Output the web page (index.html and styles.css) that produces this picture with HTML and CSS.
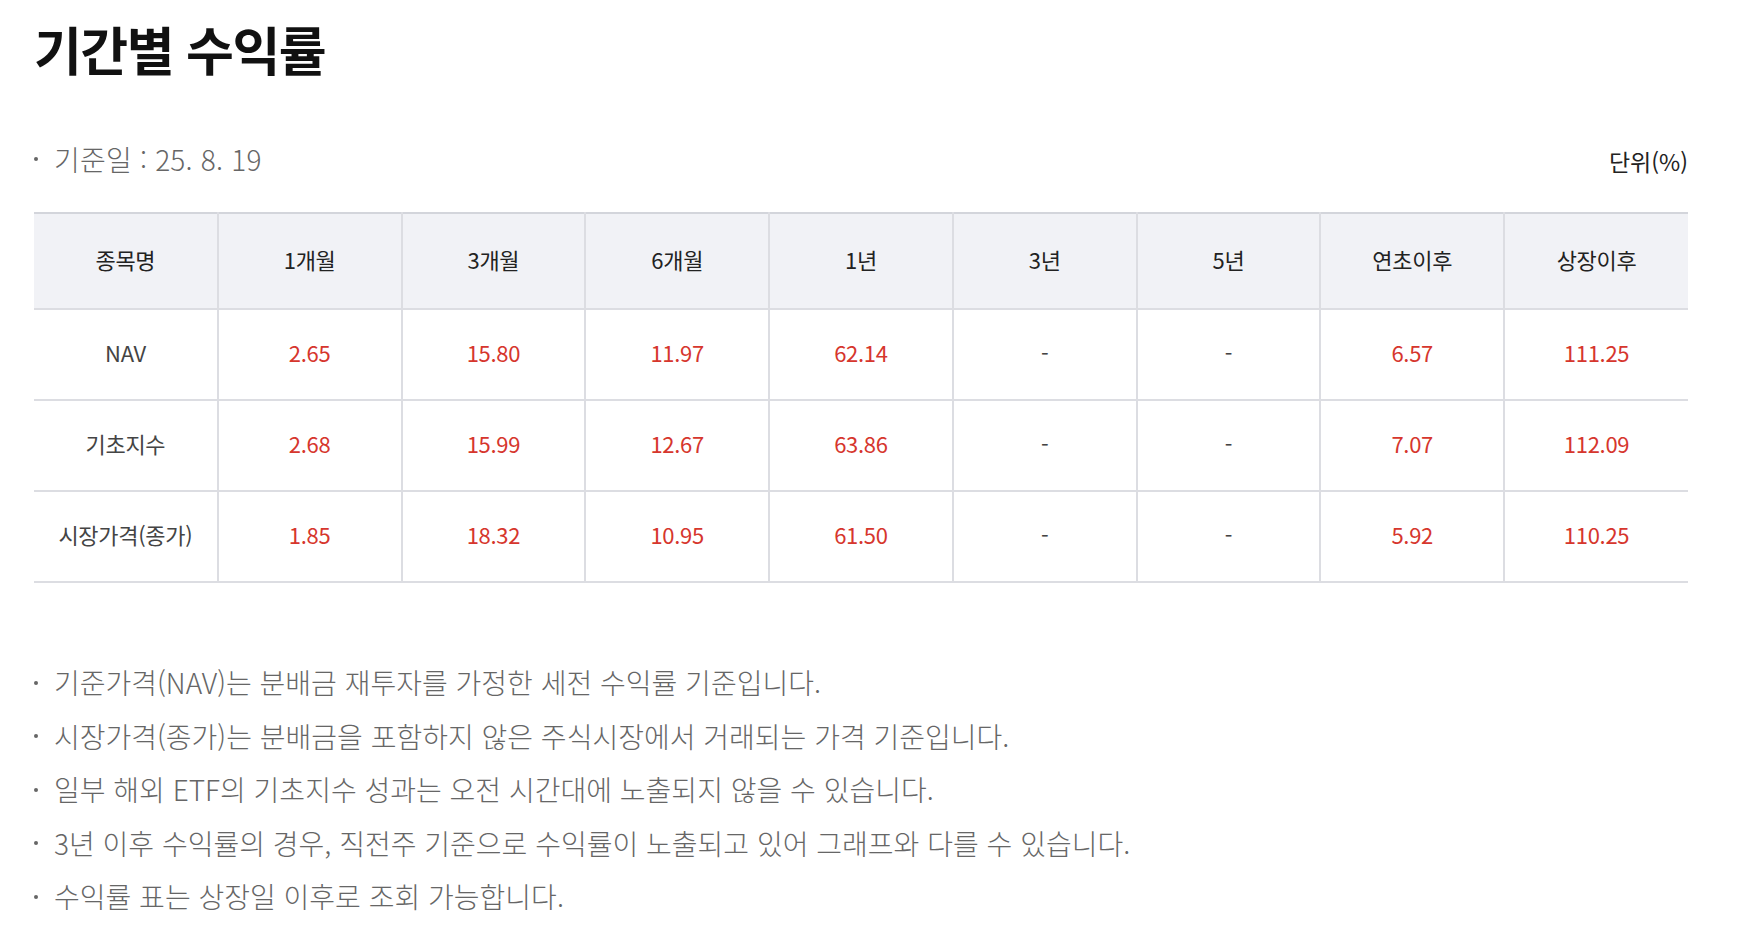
FILE: index.html
```html
<!DOCTYPE html>
<html lang="ko">
<head>
<meta charset="utf-8">
<title>기간별 수익률</title>
<link rel="stylesheet" href="styles.css">
</head>
<body>
<section class="returns">
  <h2 class="returns-title">기간별 수익률</h2>
  <div class="returns-info">
    <p class="bullet base-date">기준일 : 25. 8. 19</p>
    <p class="unit">단위(%)</p>
  </div>
  <table class="returns-table">
    <thead>
      <tr>
        <th>종목명</th><th>1개월</th><th>3개월</th><th>6개월</th><th>1년</th><th>3년</th><th>5년</th><th>연초이후</th><th>상장이후</th>
      </tr>
    </thead>
    <tbody>
      <tr>
        <td class="name">NAV</td><td class="up">2.65</td><td class="up">15.80</td><td class="up">11.97</td><td class="up">62.14</td><td class="none">-</td><td class="none">-</td><td class="up">6.57</td><td class="up">111.25</td>
      </tr>
      <tr>
        <td class="name">기초지수</td><td class="up">2.68</td><td class="up">15.99</td><td class="up">12.67</td><td class="up">63.86</td><td class="none">-</td><td class="none">-</td><td class="up">7.07</td><td class="up">112.09</td>
      </tr>
      <tr>
        <td class="name">시장가격(종가)</td><td class="up">1.85</td><td class="up">18.32</td><td class="up">10.95</td><td class="up">61.50</td><td class="none">-</td><td class="none">-</td><td class="up">5.92</td><td class="up">110.25</td>
      </tr>
    </tbody>
  </table>
  <ul class="notes">
    <li class="bullet">기준가격(NAV)는 분배금 재투자를 가정한 세전 수익률 기준입니다.</li>
    <li class="bullet">시장가격(종가)는 분배금을 포함하지 않은 주식시장에서 거래되는 가격 기준입니다.</li>
    <li class="bullet">일부 해외 ETF의 기초지수 성과는 오전 시간대에 노출되지 않을 수 있습니다.</li>
    <li class="bullet">3년 이후 수익률의 경우, 직전주 기준으로 수익률이 노출되고 있어 그래프와 다를 수 있습니다.</li>
    <li class="bullet">수익률 표는 상장일 이후로 조회 가능합니다.</li>
  </ul>
</section>
</body>
</html>
```

FILE: styles.css
```css
* { box-sizing: border-box; }
html, body { margin: 0; padding: 0; background: #fff; }
body {
  font-family: "Noto Sans CJK KR", "Noto Sans", sans-serif;
  color: #222;
}
.returns {
  width: 1654px;
  margin-left: 34px;
  padding-top: 14px;
}
.returns-title {
  margin: 0;
  font-size: 52px;
  line-height: 70px;
  font-weight: 700;
  letter-spacing: -1.5px;
  color: #111;
}
.returns-info {
  display: flex;
  justify-content: space-between;
  align-items: baseline;
  margin-top: 55px;
}
.returns-info p { margin: 0; }
.bullet {
  position: relative;
  padding-left: 20px;
}
.bullet::before {
  content: "";
  position: absolute;
  left: 0;
  top: 50%;
  width: 4px;
  height: 4px;
  margin-top: -2px;
  border-radius: 50%;
  background: #666;
}
.base-date {
  font-size: 28px;
  font-weight: 300;
  color: #666;
  letter-spacing: 0.2px;
  line-height: 40px;
}
.unit {
  font-size: 23px;
  color: #222;
  line-height: 30px;
}
.returns-table {
  width: 100%;
  margin-top: 33px;
  border-collapse: collapse;
  table-layout: fixed;
  border-top: 2px solid #d3d5db;
}
.returns-table th,
.returns-table td {
  border: 2px solid #dcdde2;
  border-top: 0;
  padding: 0 4px 5px;
  text-align: center;
  font-size: 22px;
  letter-spacing: -0.3px;
}
.returns-table th:first-child,
.returns-table td:first-child { border-left: 0; }
.returns-table th:last-child,
.returns-table td:last-child { border-right: 0; }
.returns-table th {
  height: 96px;
  background: #f1f2f6;
  font-weight: 400;
  color: #222;
}
.returns-table td {
  height: 91px;
  font-weight: 400;
}
.returns-table td.name { color: #444; }
.returns-table td.up { color: #d6362d; }
.returns-table td.none { color: #444; }
.notes {
  list-style: none;
  margin: 73px 0 0;
  padding: 0;
}
.notes li {
  font-size: 28px;
  font-weight: 300;
  color: #666;
  letter-spacing: 0;
  line-height: 53.5px;
}
```
